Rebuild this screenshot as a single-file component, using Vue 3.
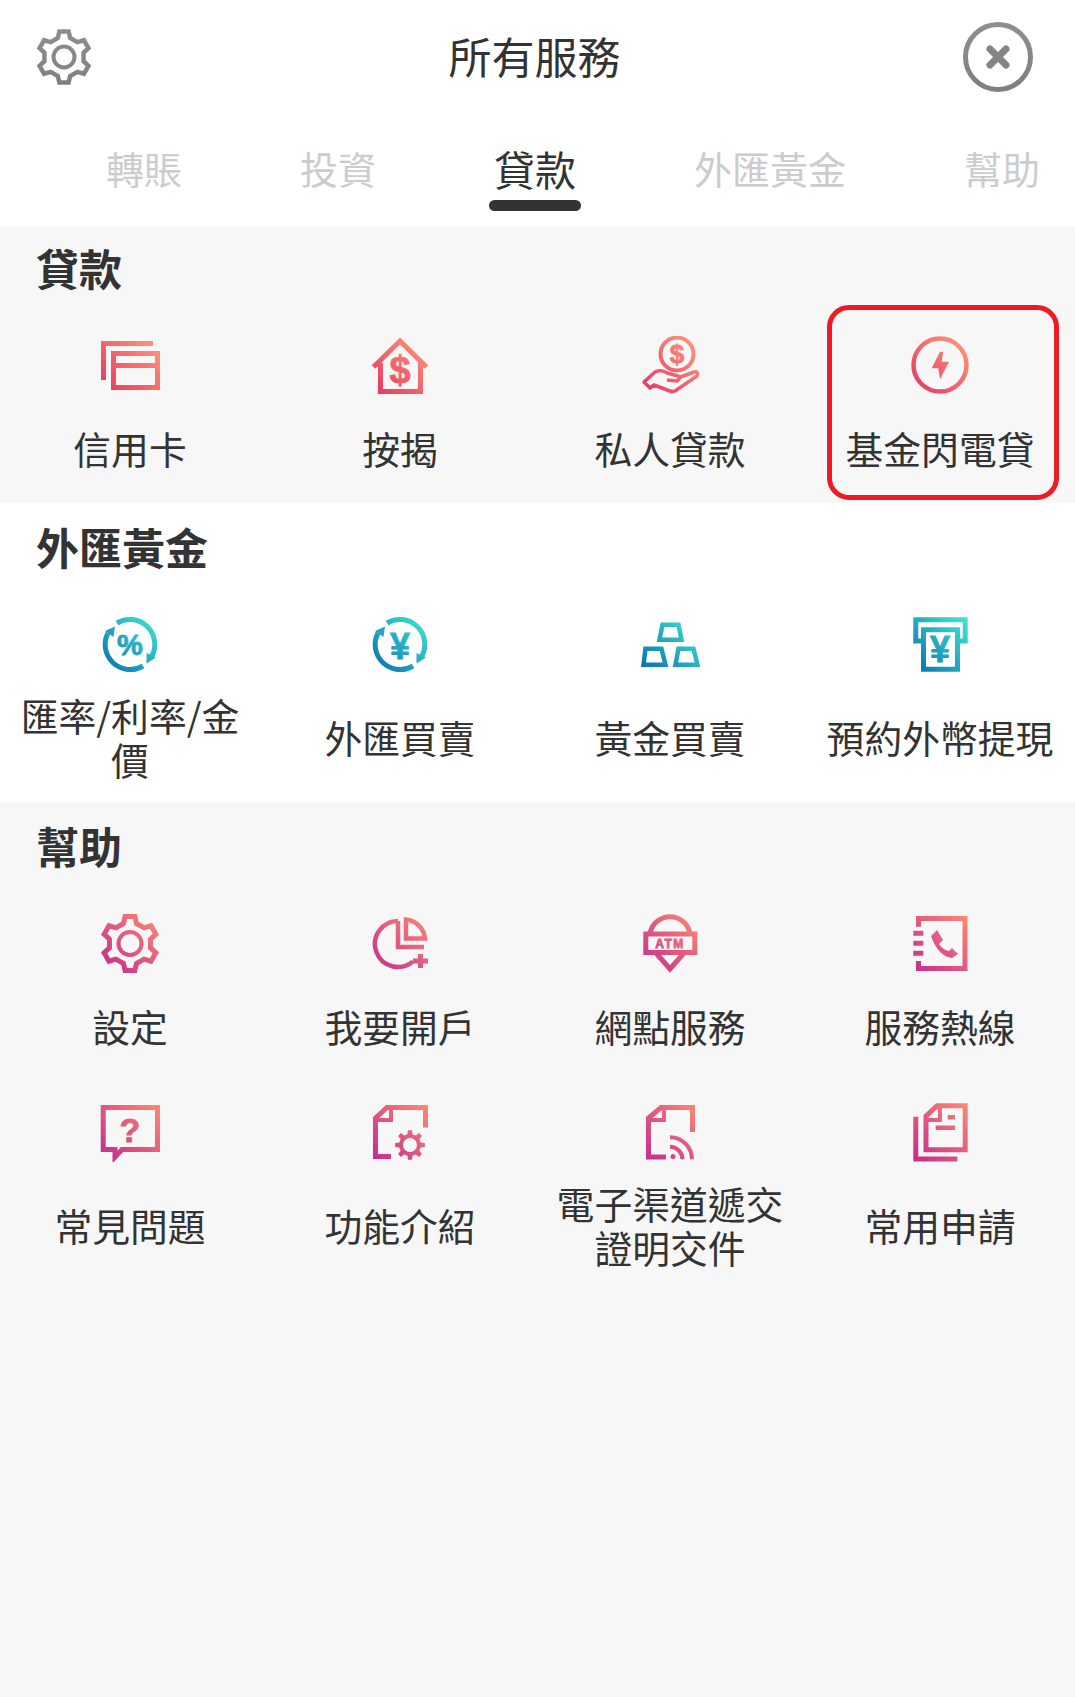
<script setup>
function gear(cx, cy, ro, ri, n) {
  const step = (Math.PI * 2) / n
  let d = ''
  for (let i = 0; i < n; i++) {
    const a = i * step - Math.PI / 2
    const pts = [
      [ri, a - step * 0.3],
      [ro, a - step * 0.17],
      [ro, a + step * 0.17],
      [ri, a + step * 0.3],
    ]
    for (const [r, t] of pts) {
      d += (d ? 'L' : 'M') + (cx + r * Math.cos(t)).toFixed(2) + ' ' + (cy + r * Math.sin(t)).toFixed(2)
    }
  }
  return d + 'Z'
}

function circle(cx, cy, r) {
  return `M${cx - r} ${cy}a${r} ${r} 0 1 0 ${r * 2} 0a${r} ${r} 0 1 0 ${-r * 2} 0Z`
}

const swirl = [
  { s: 'M17 9A25 25 0 0 1 52 42', w: 5 },
  { s: 'M43 52A25 25 0 0 1 8 19', w: 5 },
  { f: 'M5 17L15 12.5L13.5 23Z' },
  { f: 'M46.5 39L56 43.5L46.5 49.5Z' },
]

const sections = [
  {
    title: '貸款',
    tone: 'grey',
    grad: 'pink',
    items: [
      {
        label: '信用卡',
        parts: [
          { s: 'M3.5 44V7.5H53', w: 5 },
          { s: 'M13.5 17.5H57.5V51.5H13.5ZM13.5 29.5H57.5', w: 5 },
        ],
      },
      {
        label: '按揭',
        parts: [
          { s: 'M3.5 31L30 5L56.5 31', w: 5 },
          { s: 'M10.5 27V55.5H50.5V27', w: 5 },
          { t: '$', x: 30, y: 47, size: 38 },
        ],
      },
      {
        label: '私人貸款',
        parts: [
          { s: circle(37, 18, 16.5), w: 4 },
          { t: '$', x: 37, y: 27, size: 26 },
          { s: 'M38 42L54 36Q59 35 57 40L35 55Q33 56 30 55L14 49L10 52L4 46L15 36Q22 33 27 37L38 40Q41 42 37 45L27 44', w: 3.5, round: true },
        ],
      },
      {
        label: '基金閃電貸',
        mark: true,
        parts: [
          { s: circle(30, 29, 26.5), w: 4.5 },
          { f: 'M30 15.7L21.7 32.3H28.3L30 43L39 25.7H31.7L33.3 15.7Z' },
        ],
      },
    ],
  },
  {
    title: '外匯黃金',
    tone: 'white',
    grad: 'teal',
    items: [
      {
        label: '匯率/利率/金價',
        parts: [...swirl, { t: '%', x: 30, y: 41, size: 29 }],
      },
      {
        label: '外匯買賣',
        parts: [...swirl, { t: '¥', x: 30, y: 45, size: 36 }],
      },
      {
        label: '黃金買賣',
        parts: [
          { s: 'M22.5 10.7H38.5L41.5 25.7H19.5Z', w: 4.5 },
          { s: 'M5.5 34.7H21.5L25.5 50.7H3.5Z', w: 4.5 },
          { s: 'M38.5 34.7H53.5L57.5 50.7H35.5Z', w: 4.5 },
        ],
      },
      {
        label: '預約外幣提現',
        parts: [
          { s: 'M11 27H5.8V5.8H55.2V27H50', w: 5 },
          { s: 'M13.5 15.8H47.5V55.3H13.5Z', w: 5 },
          { t: '¥', x: 30, y: 48, size: 36 },
        ],
      },
    ],
  },
  {
    title: '幫助',
    tone: 'grey',
    grad: 'magenta',
    items: [
      {
        label: '設定',
        parts: [
          { s: gear(30, 29.5, 27.5, 21, 6), w: 5 },
          { s: circle(30, 29.5, 11.5), w: 4 },
        ],
      },
      {
        label: '我要開戶',
        parts: [
          { s: 'M28 7A23 23 0 1 0 43 47.4', w: 4.5 },
          { s: 'M28 7V33H54', w: 4.5 },
          { s: 'M36 5.5V24.5H55A21 21 0 0 0 36 5.5Z', w: 4.5 },
          { s: 'M43 47H58M50.5 40V54', w: 5 },
        ],
      },
      {
        label: '網點服務',
        parts: [
          { s: 'M5.8 20H54.8V38.6H5.8Z', w: 5 },
          { s: 'M10 20A20.2 20.2 0 0 1 50 20', w: 5 },
          { s: 'M16 39L30 55L44 39', w: 5 },
          { t: 'ATM', x: 30, y: 34, size: 12, gap: 1.5 },
        ],
      },
      {
        label: '服務熱線',
        parts: [
          { s: 'M8.5 12.7V4.5H55V54.5H8.5V47', w: 5 },
          { s: 'M3.3 19.3H13.3M3.3 29.3H13.3M3.3 39.3H13.3', w: 5 },
          { f: 'M21 22L27 16L33 26L29 30Q33 36 39 37L42 34L48 40L42 44Q28 42 21 22Z' },
        ],
      },
      {
        label: '常見問題',
        parts: [
          { s: 'M3.2 5.5H57.5V47.5H22L15 55V47.5H3.2Z', w: 5 },
          { t: '?', x: 30, y: 39.5, size: 34 },
        ],
      },
      {
        label: '功能介紹',
        parts: [
          { s: 'M55.5 25.5V5.5H17L5.5 16V54.5H21', w: 5 },
          { s: 'M21 5V18H6', w: 4 },
          { f: gear(40, 43, 15, 11, 8) + circle(40, 43, 7), even: true },
        ],
      },
      {
        label: '電子渠道遞交證明交件',
        parts: [
          { s: 'M52.5 30V5.5H21L8.5 16V55H26', w: 5 },
          { s: 'M24 5V18H9', w: 4 },
          { s: 'M30 35.3A22 22 0 0 1 52 57.3', w: 4 },
          { s: 'M30 44.8A12.5 12.5 0 0 1 42.5 57.3', w: 4 },
          { f: circle(33, 54.5, 2.5) },
        ],
      },
      {
        label: '常用申請',
        parts: [
          { s: 'M5.8 14.7V57H47.3', w: 5 },
          { s: 'M27 3.8H55.2V47.8H16V14Z', w: 5 },
          { s: 'M30 5V18H17', w: 4 },
          { s: 'M37.7 15.3H45M25.7 25.7H45', w: 4.5 },
        ],
      },
    ],
  },
]

const tabs = ['轉賬', '投資', '貸款', '外匯黃金', '幫助']
const headerGear = { s: gear(30, 30, 26, 20, 6), ring: circle(30, 30, 10.5) }
</script>

<template>
  <div class="page">
    <svg class="defs" aria-hidden="true">
      <defs>
        <linearGradient id="pink" gradientUnits="userSpaceOnUse" x1="0" y1="60" x2="60" y2="0">
          <stop offset="0" stop-color="#e62f60" />
          <stop offset="1" stop-color="#ffa07c" />
        </linearGradient>
        <linearGradient id="teal" gradientUnits="userSpaceOnUse" x1="0" y1="60" x2="60" y2="0">
          <stop offset="0" stop-color="#0668ad" />
          <stop offset="1" stop-color="#44efd5" />
        </linearGradient>
        <linearGradient id="magenta" gradientUnits="userSpaceOnUse" x1="0" y1="60" x2="60" y2="0">
          <stop offset="0" stop-color="#c2268f" />
          <stop offset="1" stop-color="#ff8d72" />
        </linearGradient>
        <linearGradient id="grey" gradientUnits="userSpaceOnUse" x1="0" y1="0" x2="0" y2="60">
          <stop offset="0" stop-color="#8f8f8f" />
          <stop offset="1" stop-color="#808080" />
        </linearGradient>
      </defs>
    </svg>

    <header class="top">
      <svg class="top-gear" viewBox="0 0 60 60">
        <path :d="headerGear.s" fill="none" stroke="url(#grey)" stroke-width="4.5" />
        <path :d="headerGear.ring" fill="none" stroke="url(#grey)" stroke-width="4" />
      </svg>
      <h1 class="top-title">所有服務</h1>
      <div class="top-right">
        <svg class="top-close" viewBox="0 0 70 70">
          <circle cx="35" cy="35" r="32.5" fill="none" stroke="url(#grey)" stroke-width="5" />
          <path d="M27 27L43 43M43 27L27 43" fill="none" stroke="#858585" stroke-width="7" stroke-linecap="round" />
        </svg>
      </div>
    </header>

    <nav class="tabs">
      <div v-for="tab in tabs" :key="tab" class="tab" :class="{ active: tab === '貸款' }">{{ tab }}</div>
    </nav>

    <section v-for="sec in sections" :key="sec.title" class="section" :class="sec.tone">
      <h2 class="section-title">{{ sec.title }}</h2>
      <div class="grid">
        <div v-for="item in sec.items" :key="item.label" class="item" :class="{ marked: item.mark }">
          <svg class="icon" viewBox="0 0 60 60">
            <template v-for="(p, i) in item.parts" :key="i">
              <path
                v-if="p.s"
                :d="p.s"
                fill="none"
                :stroke="`url(#${sec.grad})`"
                :stroke-width="p.w"
                :stroke-linejoin="p.round ? 'round' : 'miter'"
              />
              <path
                v-else-if="p.f"
                :d="p.f"
                :fill="`url(#${sec.grad})`"
                :fill-rule="p.even ? 'evenodd' : 'nonzero'"
              />
              <text
                v-else
                class="glyph"
                :x="p.x"
                :y="p.y"
                :font-size="p.size"
                :letter-spacing="p.gap || 0"
                :fill="`url(#${sec.grad})`"
                :stroke="`url(#${sec.grad})`"
              >{{ p.t }}</text>
            </template>
          </svg>
          <div class="label">{{ item.label }}</div>
        </div>
      </div>
    </section>
  </div>
</template>

<style scoped>
.page {
  width: 1075px;
  min-height: 1697px;
  display: flex;
  flex-direction: column;
  background: #fff;
  color: #333;
  font-family: "Noto Sans CJK TC", "Noto Sans", sans-serif;
}

.defs {
  position: absolute;
  width: 0;
  height: 0;
}

.top {
  height: 114px;
  display: grid;
  grid-template-columns: 1fr auto 1fr;
  align-items: center;
  padding: 0 42px 0 34px;
  box-sizing: border-box;
}

.top-gear {
  width: 60px;
  height: 60px;
}

.top-right {
  display: flex;
  justify-content: flex-end;
}

.top-close {
  width: 70px;
  height: 70px;
}

.top-title {
  margin: -4px 0 0 2px;
  font-size: 43px;
  font-weight: 400;
  line-height: 60px;
}

.tabs {
  height: 113px;
  box-sizing: border-box;
  padding: 29px 0 0 106px;
  display: flex;
  gap: 118px;
  align-items: flex-start;
}

.tab {
  position: relative;
  font-size: 38px;
  line-height: 50px;
  color: #ccc;
  white-space: nowrap;
}

.tab.active {
  font-size: 41px;
  color: #333;
}

.tab.active::after {
  content: '';
  position: absolute;
  left: 50%;
  top: 57px;
  width: 92px;
  height: 11px;
  margin-left: -46px;
  border-radius: 6px;
  background: #333;
}

.section {
  padding: 18px 0 21px;
}

.section.grey {
  background: #f7f7f7;
}

.section.white {
  background: #fff;
}

.section:nth-of-type(1) {
  padding: 15px 0 22px;
}

.section:last-child {
  flex: 1;
}

.section-title {
  margin: 0 0 43px 36px;
  font-size: 43px;
  font-weight: 700;
  line-height: 50px;
}

.section:nth-of-type(1) .section-title {
  margin-bottom: 44px;
}

.section:last-child .section-title {
  margin-bottom: 44px;
}

.grid {
  display: grid;
  grid-template-columns: repeat(4, 270px);
  margin-left: -5px;
  row-gap: 43px;
}

.item {
  position: relative;
  display: flex;
  flex-direction: column;
  align-items: center;
}

.marked::after {
  content: '';
  position: absolute;
  top: -31px;
  bottom: -19px;
  left: 22px;
  right: 16px;
  border: 5px solid #ed1c24;
  border-radius: 22px;
}

.icon {
  width: 60px;
  height: 60px;
  margin-bottom: 19px;
  flex: none;
}

.glyph {
  font-family: "Liberation Sans", sans-serif;
  font-weight: 700;
  text-anchor: middle;
  stroke-width: 0.8px;
}

.label {
  flex: 1;
  min-height: 66px;
  max-width: 240px;
  display: flex;
  align-items: center;
  text-align: center;
  font-size: 37.8px;
  line-height: 44px;
}
</style>
